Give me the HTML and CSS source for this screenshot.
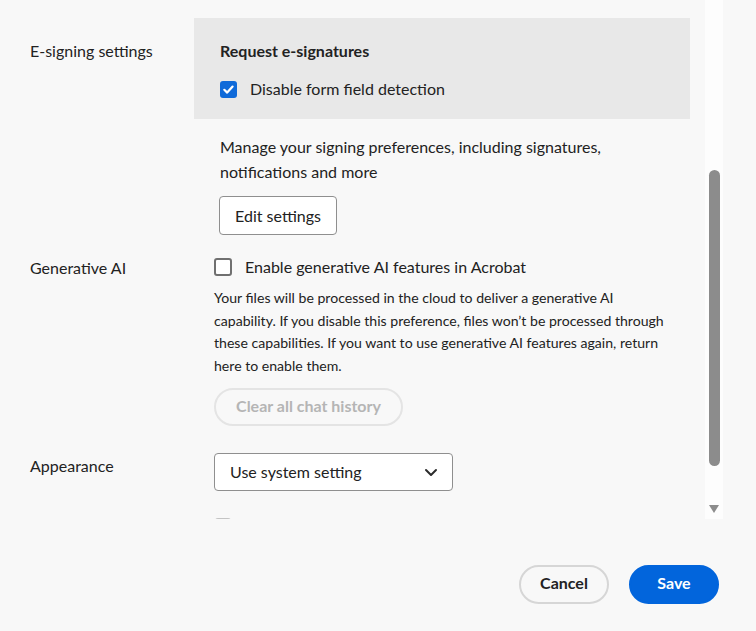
FILE: index.html
```html
<!DOCTYPE html>
<html lang="en">
<head>
<meta charset="utf-8">
<title>Preferences</title>
<link rel="stylesheet" href="styles.css">
</head>
<body>
<div class="dialog">
  <div class="main">
    <div class="scroll">
      <div class="content">
        <div class="row">
          <div class="label label-esign">E-signing settings</div>
          <div class="field">
            <div class="panel">
              <div class="panel-title">Request e-signatures</div>
              <label class="check check-panel">
                <span class="box box-on"><svg viewBox="0 0 17 17" width="17" height="17"><path d="M4.3 8.8 L7.2 11.6 L12.6 5.6" fill="none" stroke="#fff" stroke-width="2.2" stroke-linecap="round" stroke-linejoin="round"/></svg></span>
                <span class="check-text">Disable form field detection</span>
              </label>
            </div>
            <p class="manage">Manage your signing preferences, including signatures, notifications and more</p>
            <button class="btn-secondary">Edit settings</button>
          </div>
        </div>

        <div class="row row-genai">
          <div class="label label-small">Generative AI</div>
          <div class="field">
            <label class="check">
              <span class="box box-off"></span>
              <span class="check-text">Enable generative AI features in Acrobat</span>
            </label>
            <p class="desc">Your files will be processed in the cloud to deliver a generative AI capability. If you disable this preference, files won’t be processed through these capabilities. If you want to use generative AI features again, return here to enable them.</p>
            <button class="btn-disabled" disabled>Clear all chat history</button>
          </div>
        </div>

        <div class="row row-appearance">
          <div class="label label-small">Appearance</div>
          <div class="field">
            <div class="select">
              <span>Use system setting</span>
              <svg class="chev" viewBox="0 0 14 9" width="14" height="9"><path d="M2 2 L7 7 L12 2" fill="none" stroke="#2c2c2c" stroke-width="2" stroke-linecap="round" stroke-linejoin="round"/></svg>
            </div>
          </div>
        </div>

        <div class="row row-next">
          <div class="label"></div>
          <div class="field">
            <span class="box box-faint"></span>
          </div>
        </div>
      </div>
    </div>
    <div class="scrollbar">
      <div class="thumb"></div>
      <div class="arrow"></div>
    </div>
  </div>
  <div class="footer">
    <button class="btn-cancel">Cancel</button>
    <button class="btn-save">Save</button>
  </div>
</div>
</body>
</html>
```
FILE: styles.css
```css
* { box-sizing: border-box; }
html, body {
  margin: 0;
  padding: 0;
  background: #f8f8f8;
}
body {
  font-family: Lato, "Open Sans", sans-serif;
  color: #222222;
  width: 756px;
  height: 631px;
  overflow: hidden;
}
.dialog {
  display: flex;
  flex-direction: column;
  height: 631px;
}
.main {
  display: flex;
  height: 519px;
}
.scroll {
  width: 705px;
  overflow: hidden;
}
.content {
  padding: 18px 0 0 30px;
}
.row {
  display: grid;
  grid-template-columns: 184px 476px;
}
.label {
  font-size: 16px;
  line-height: 24px;
}
.label-esign { padding-top: 21px; }
.label-small { padding-top: 1px; }
.field {
  display: flex;
  flex-direction: column;
  align-items: flex-start;
}
.panel {
  width: 496px;
  margin-left: -20px;
  background: #e8e8e8;
  padding: 21px 26px 18px;
}
.panel-title {
  font-size: 16px;
  font-weight: 700;
  line-height: 24px;
}
.check {
  display: flex;
  align-items: center;
  gap: 13px;
  font-size: 16px;
  line-height: 24px;
}
.check-panel { margin-top: 14px; }
.box {
  width: 18px;
  height: 18px;
  border-radius: 3px;
  display: block;
  flex: none;
}
.box-on {
  width: 17px;
  height: 17px;
  background: #0f6ad9;
}
.box-on svg { display: block; }
.box-off {
  border: 2px solid #707070;
  background: #ffffff;
}
.box-faint {
  border: 2px solid #c4c4c4;
  margin-left: 1px;
  width: 16px;
}
.manage {
  margin: 15px 0 0 6px;
  font-size: 16px;
  line-height: 25px;
  max-width: 420px;
}
.btn-secondary {
  margin: 12px 0 0 5px;
  height: 39px;
  padding: 0 15px;
  width: 118px;
  border: 1px solid #8f8f8f;
  border-radius: 4px;
  background: #ffffff;
  font: 16px Lato, "Open Sans", sans-serif;
  color: #222222;
}
.row-genai { margin-top: 20px; }
.desc {
  margin: 8px 0 0;
  font-size: 14.1px;
  line-height: 22.5px;
  max-width: 456px;
}
.btn-disabled {
  margin-top: 11px;
  height: 38px;
  width: 189px;
  padding: 0 0 3px;
  border: 2px solid #e4e4e4;
  border-radius: 19px;
  background: transparent;
  font: 700 16px Lato, "Open Sans", sans-serif;
  color: #b5b5b5;
}
.row-appearance { margin-top: 27px; }
.select {
  width: 239px;
  height: 38px;
  border: 1px solid #8f8f8f;
  border-radius: 4px;
  background: #ffffff;
  display: flex;
  align-items: center;
  justify-content: space-between;
  padding: 0 14px 1px 15px;
  font-size: 16px;
}
.chev { display: block; margin-top: 1px; }
.row-next { margin-top: 27px; }
.scrollbar {
  width: 18px;
  background: #fdfdfd;
  display: flex;
  flex-direction: column;
  align-items: center;
}
.thumb {
  margin-top: 170px;
  width: 11px;
  height: 296px;
  border-radius: 6px;
  background: #8c8c8c;
}
.arrow {
  margin-top: 39px;
  width: 0;
  height: 0;
  border-left: 5.5px solid transparent;
  border-right: 5.5px solid transparent;
  border-top: 8px solid #8c8c8c;
}
.footer {
  display: flex;
  justify-content: flex-end;
  gap: 20px;
  padding: 46px 37px 0 0;
}
.footer button {
  width: 90px;
  height: 39px;
  padding: 0 0 4px;
  border-radius: 20px;
  font: 700 16px Lato, "Open Sans", sans-serif;
}
.btn-cancel {
  background: transparent;
  border: 2px solid #d6d6d6;
  color: #222222;
}
.btn-save {
  background: #0265dc;
  border: 2px solid #0265dc;
  color: #ffffff;
}
```
